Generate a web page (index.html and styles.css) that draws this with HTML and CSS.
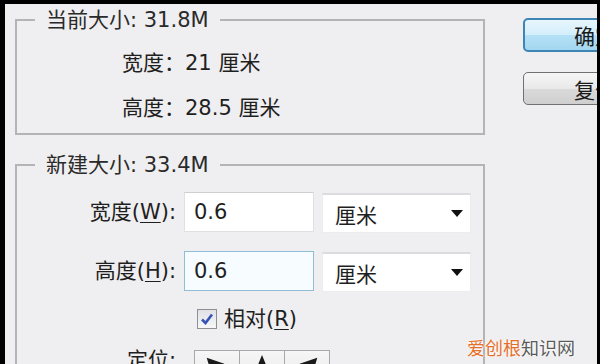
FILE: index.html
```html
<!DOCTYPE html>
<html lang="zh-CN">
<head>
<meta charset="utf-8">
<title>画布大小</title>
<link rel="stylesheet" href="styles.css">
</head>
<body>
<div class="frame">
  <div class="main">
    <fieldset class="group g1">
      <legend>当前大小: 31.8M</legend>
      <div class="info">宽度：21 厘米</div>
      <div class="info">高度：28.5 厘米</div>
    </fieldset>
    <fieldset class="group g2">
      <legend>新建大小: 33.4M</legend>
      <div class="form">
        <label class="lbl">宽度(<u>W</u>):</label>
        <input class="field" value="0.6">
        <div class="select"><span>厘米</span><svg class="caret" width="12" height="7" viewBox="0 0 12 7"><path d="M0 0H12L6 7Z" fill="#111"/></svg></div>

        <label class="lbl">高度(<u>H</u>):</label>
        <input class="field focus" value="0.6">
        <div class="select"><span>厘米</span><svg class="caret" width="12" height="7" viewBox="0 0 12 7"><path d="M0 0H12L6 7Z" fill="#111"/></svg></div>

        <div></div>
        <div class="check-row">
          <span class="checkbox"><svg width="14" height="14" viewBox="0 0 14 14"><path d="M2 7.5L5.5 11L12 2.5" fill="none" stroke="#3553b5" stroke-width="2.6"/></svg></span>
          <span class="check-label">相对(<u>R</u>)</span>
        </div>

        <label class="lbl anchor-lbl">定位:</label>
        <div class="anchors">
          <span class="cell"><svg width="45" height="45" viewBox="0 0 45 45"><path d="M12 7L30 13L24 16L34 30L31 32L21 18L17 24Z" fill="#1a1a1a"/></svg></span>
          <span class="cell"><svg width="45" height="45" viewBox="0 0 45 45"><path d="M22.5 4L29 20L24 18V34H21V18L16 20Z" fill="#1a1a1a"/></svg></span>
          <span class="cell"><svg width="45" height="45" viewBox="0 0 45 45"><path d="M33 7L15 13L21 16L11 30L14 32L24 18L28 24Z" fill="#1a1a1a"/></svg></span>
        </div>
      </div>
    </fieldset>
  </div>
  <div class="side">
    <button class="btn primary">确定</button>
    <button class="btn">复位</button>
  </div>
  <div class="watermark"><span class="wm-a">爱创根</span><span class="wm-b">知识网</span></div>
</div>
</body>
</html>
```

FILE: styles.css
```css
html, body {
  margin: 0;
  padding: 0;
  background: #efeef0;
}

.frame {
  width: 600px;
  height: 364px;
  box-sizing: border-box;
  border-top: 4px solid #000;
  border-left: 5px solid #000;
  border-right: 3px solid #000;
  background: #efeef0;
  display: flex;
  overflow: hidden;
  position: relative;
  font-family: "DejaVu Sans", "Noto Sans CJK SC", sans-serif;
  font-size: 21px;
  color: #1f1f1f;
}

.main {
  flex: 0 0 470px;
  padding: 4px 0 0 10px;
}

.group {
  margin: 0;
  padding: 0;
  border: 2px solid #b4b4b6;
  min-width: 0;
}

.group legend {
  margin-left: 18px;
  padding: 0 11px;
  line-height: 24px;
  font-size: 21px;
  color: #2a2a2a;
}

.g1 {
  padding: 9px 0 2px 0;
}

.info {
  margin-left: 105px;
  height: 45px;
  line-height: 45px;
  font-size: 21px;
}

.g2 {
  margin-top: 18px;
  padding: 14px 0 0 0;
  height: 400px;
}

.form {
  display: grid;
  grid-template-columns: 159px 130px 149px;
  column-gap: 8px;
  row-gap: 17px;
  align-items: center;
}

.lbl {
  text-align: right;
  font-size: 21px;
  line-height: 40px;
  white-space: nowrap;
}

.lbl u, .check-label u {
  text-decoration: underline;
  text-underline-offset: 3px;
  text-decoration-thickness: 1px;
}

.field {
  box-sizing: border-box;
  width: 130px;
  height: 40px;
  margin: 0;
  padding: 0 9px;
  border: 1px solid #e0e0e2;
  border-top-color: #cfcfd2;
  background: #fff;
  font: inherit;
  font-size: 21px;
  color: #1f1f1f;
  outline: none;
}

.field.focus {
  border: 1px solid #8fbdd6;
  background: #f6fcff;
}

.select {
  box-sizing: border-box;
  height: 40px;
  margin-top: 2px;
  display: flex;
  align-items: center;
  justify-content: space-between;
  padding: 0 7px 0 12px;
  background: #fff;
  border: 1px solid #ecebee;
  border-top: 2px solid #dcdcde;
  font-family: "Noto Sans CJK SC", sans-serif;
  font-size: 21px;
}

.caret {
  display: block;
}

.check-row {
  grid-column: 2 / 4;
  margin-top: -2px;
  height: 24px;
  display: flex;
  align-items: center;
  padding-left: 13px;
  gap: 7px;
}

.checkbox {
  box-sizing: border-box;
  width: 20px;
  height: 20px;
  border: 1px solid #8d8f93;
  background: linear-gradient(#dfe1e6, #f7f7f8);
  display: flex;
  align-items: center;
  justify-content: center;
}

.check-label {
  font-family: "DejaVu Sans", "Noto Sans CJK SC", sans-serif;
  font-size: 21px;
  line-height: 24px;
}

.anchor-lbl {
  align-self: start;
  margin-top: -1px;
  line-height: 26px;
}

.anchors {
  grid-column: 2 / 4;
  margin-top: 2px;
  margin-left: 10px;
  display: grid;
  grid-template-columns: repeat(3, 45px);
  grid-auto-rows: 45px;
  border-top: 1px solid #a8a8aa;
  border-left: 1px solid #a8a8aa;
  width: max-content;
}

.cell {
  box-sizing: border-box;
  border-right: 1px solid #a8a8aa;
  border-bottom: 1px solid #a8a8aa;
  background: linear-gradient(#f6f6f7, #e4e4e6);
  display: block;
}

.cell svg {
  display: block;
  width: 44px;
  height: 44px;
}

.side {
  flex: 0 0 auto;
  margin-left: 38px;
  padding-top: 14px;
  display: flex;
  flex-direction: column;
  gap: 20px;
}

.btn {
  box-sizing: border-box;
  width: 144px;
  height: 34px;
  margin: 0;
  padding: 0;
  border-radius: 5px;
  border: 1px solid #707070;
  background: linear-gradient(#f6f6f6 0%, #e9e9e9 50%, #dadada 51%, #cfcfcf 100%);
  font-family: "Noto Sans CJK SC", sans-serif;
  font-size: 21px;
  color: #1a1a1a;
  text-align: center;
  line-height: 30px;
}

.btn.primary {
  border: 2px solid #3d85b5;
  background: linear-gradient(#e8f6fd 0%, #d2eefb 50%, #b4e1f7 51%, #a3d7f0 100%);
}

.btn:not(.primary) {
  height: 33px;
}

.watermark {
  position: absolute;
  left: 462px;
  top: 333px;
  font-family: "Noto Sans CJK SC", sans-serif;
  font-size: 18px;
  line-height: 20px;
  white-space: nowrap;
  text-shadow: 0 0 2px #fff, 0 0 2px #fff;
}

.wm-a {
  color: #e4702a;
}

.wm-b {
  color: #5a5a5a;
}
```
